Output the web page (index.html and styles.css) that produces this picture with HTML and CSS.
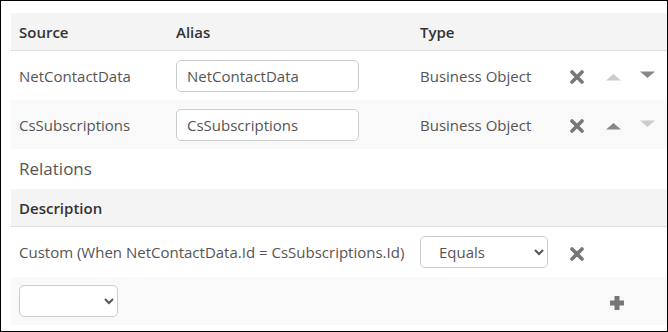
FILE: index.html
```html
<!DOCTYPE html>
<html lang="en">
<head>
  <meta charset="UTF-8" />
  <title>Sources</title>
  <link rel="stylesheet" href="styles.css">
</head>
<body>
  <div class="panel">
    <table class="grid sources">
      <thead>
        <tr>
          <th class="c-source">Source</th>
          <th class="c-alias">Alias</th>
          <th class="c-type">Type</th>
          <th class="c-actions"></th>
        </tr>
      </thead>
      <tbody>
        <tr>
          <td>NetContactData</td>
          <td><input type="text" class="field" value="NetContactData" /></td>
          <td>Business Object</td>
          <td class="actions">
            <svg class="ico ico-x" width="14" height="14" viewBox="0 0 14 14"><path d="M2 2L12 12M12 2L2 12" /></svg>
            <svg class="ico tri up off" width="15" height="8" viewBox="0 0 15 8"><path d="M7.5 1L15 7.5H0Z" /></svg>
            <svg class="ico tri down" width="15" height="8" viewBox="0 0 15 8"><path d="M0 0.5H15L7.5 7Z" /></svg>
          </td>
        </tr>
        <tr class="alt">
          <td>CsSubscriptions</td>
          <td><input type="text" class="field" value="CsSubscriptions" /></td>
          <td>Business Object</td>
          <td class="actions">
            <svg class="ico ico-x" width="14" height="14" viewBox="0 0 14 14"><path d="M2 2L12 12M12 2L2 12" /></svg>
            <svg class="ico tri up" width="15" height="8" viewBox="0 0 15 8"><path d="M7.5 1L15 7.5H0Z" /></svg>
            <svg class="ico tri down off" width="15" height="8" viewBox="0 0 15 8"><path d="M0 0.5H15L7.5 7Z" /></svg>
          </td>
        </tr>
      </tbody>
    </table>

    <h3 class="section-title">Relations</h3>

    <table class="grid relations">
      <colgroup>
        <col class="c-desc" />
        <col class="c-op" />
        <col />
      </colgroup>
      <thead>
        <tr>
          <th colspan="3">Description</th>
        </tr>
      </thead>
      <tbody>
        <tr class="rel-row">
          <td class="desc">Custom (When NetContactData.Id = CsSubscriptions.Id)</td>
          <td>
            <select class="pick op">
              <option>Equals</option>
            </select>
          </td>
          <td class="del">
            <svg class="ico ico-x" width="14" height="14" viewBox="0 0 14 14"><path d="M2 2L12 12M12 2L2 12" /></svg>
          </td>
        </tr>
        <tr class="alt add-row">
          <td class="desc">
            <select class="pick empty">
              <option></option>
            </select>
          </td>
          <td></td>
          <td class="add">
            <svg class="ico ico-plus" width="16" height="16" viewBox="0 0 16 16"><path d="M8 1V15M1 8H15" /></svg>
          </td>
        </tr>
      </tbody>
    </table>
  </div>
</body>
</html>
```

FILE: styles.css
```css
html, body {
  margin: 0;
  height: 100%;
}
body {
  font-family: 'Open Sans', sans-serif;
  font-size: 15px;
  color: #555;
  background: #fff;
}
.panel {
  box-sizing: border-box;
  height: 332px;
  border: 1px solid #000;
  padding: 12px 0 5px 10px;
  overflow: hidden;
}
.grid {
  width: 100%;
  border-collapse: collapse;
  table-layout: fixed;
}
.grid th {
  background: #f4f4f4;
  color: #333;
  font-weight: 600;
  text-align: left;
  height: 37px;
  padding: 0 8px;
  border-bottom: 1px solid #ddd;
}
.grid td {
  padding: 0 8px;
  height: 49px;
}
.grid tr.alt td {
  background: #f9f9f9;
}
.c-source { width: 141px; }
.c-alias { width: 228px; }
.c-type { width: 134px; }
.field {
  box-sizing: border-box;
  width: 183px;
  height: 32px;
  border: 1px solid #ccc;
  border-radius: 5px;
  padding: 0 10px;
  font-family: inherit;
  font-size: 15px;
  color: #555;
  background: #fff;
}
.actions {
  white-space: nowrap;
}
.ico {
  display: inline-block;
  vertical-align: middle;
}
.ico-x path {
  stroke: #777;
  stroke-width: 3.6;
  stroke-linecap: round;
  fill: none;
}
.ico-plus path {
  stroke: #777;
  stroke-width: 5;
  fill: none;
}
.tri path {
  fill: #888;
}
.tri.off path {
  fill: #ccc;
}
.actions .ico-x {
  margin-right: 18px;
}
.actions .tri.up {
  margin-right: 15px;
}
.tri.down {
  position: relative;
  top: -2px;
}
.section-title {
  margin: 0;
  height: 40px;
  line-height: 40px;
  padding-left: 8px;
  font-size: 17px;
  font-weight: 400;
  color: #555;
}
.relations .c-desc { width: 401px; }
.relations .c-op { width: 143px; }
.relations .desc {
  white-space: nowrap;
}
.relations .rel-row td {
  height: 50px;
}
.relations .add-row td {
  height: 48px;
}
.grid td.del { padding-left: 15px; }
.grid td.add {
  text-align: right;
  padding-right: 42px;
}
.pick {
  box-sizing: border-box;
  height: 32px;
  border: 1px solid #ccc;
  border-radius: 5px;
  background: #fff;
  font-family: inherit;
  font-size: 15px;
  color: #555;
  padding: 0 6px 0 14px;
}
.pick.op { width: 128px; }
.pick.empty { width: 99px; }
```
